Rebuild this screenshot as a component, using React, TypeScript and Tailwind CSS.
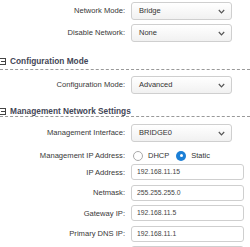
import React from "react";

function Chevron() {
  return (
    <svg width="7" height="5" viewBox="0 0 7 5" className="shrink-0">
      <polyline points="0.8,1 3.5,3.8 6.2,1" fill="none" stroke="#555" strokeWidth="1.2" />
    </svg>
  );
}

function Select({ value }: { value: string }) {
  return (
    <div className="w-[101px] h-[18px] flex items-center justify-between pl-[7px] pr-[6px] rounded-[3px] border border-[#cfcfcf] bg-gradient-to-b from-white to-[#f1f1f1] text-[7.5px] text-[#333]">
      <span>{value}</span>
      <Chevron />
    </div>
  );
}

function TextInput({ value }: { value: string }) {
  return (
    <div className="w-[113px] h-[16px] flex items-center pl-[5px] rounded-[3px] border border-[#cfcfcf] bg-white text-[6.8px] text-[#444]">
      {value}
    </div>
  );
}

function Row({ label, h, children }: { label?: string; h: string; children: React.ReactNode }) {
  return (
    <div className={`flex items-center gap-[6px] ${h}`}>
      <div className="w-[125px] text-right text-[7.6px] text-[#383838] whitespace-nowrap">{label ? `${label}:` : ""}</div>
      {children}
    </div>
  );
}

function Header({ title, h, pb }: { title: string; h: string; pb: string }) {
  return (
    <div className={`flex items-end border-b border-dashed border-[#999] ${h} ${pb}`}>
      <div className="flex items-center gap-[4px] -ml-[1px]">
        <div className="w-[7px] h-[7px] border border-[#444] flex items-center justify-center bg-white">
          <div className="w-[4px] h-[1px] bg-[#444]" />
        </div>
        <span className="text-[8.3px] leading-[10px] font-bold text-[#434656]">{title}</span>
      </div>
    </div>
  );
}

function Radio({ checked, label }: { checked?: boolean; label: string }) {
  return (
    <div className="flex items-center gap-[5px]">
      {checked ? (
        <div className="w-[10px] h-[10px] rounded-full bg-[#1c7fd6] flex items-center justify-center">
          <div className="w-[3.5px] h-[3.5px] rounded-full bg-white" />
        </div>
      ) : (
        <div className="w-[10px] h-[10px] rounded-full border border-[#aaa] bg-white" />
      )}
      <span className="text-[7.5px] text-[#333]">{label}</span>
    </div>
  );
}

export default function App() {
  return (
    <div className="w-[250px] h-[247px] overflow-hidden bg-white font-['Liberation_Sans',Arial,sans-serif]">
      <Row label="Network Mode" h="h-[22px]">
        <Select value="Bridge" />
      </Row>
      <Row label="Disable Network" h="h-[22px]">
        <Select value="None" />
      </Row>
      <Header title="Configuration Mode" h="h-[26px]" pb="pb-[3px]" />
      <Row label="Configuration Mode" h="h-[30px]">
        <Select value="Advanced" />
      </Row>
      <Header title="Management Network Settings" h="h-[17px]" pb="pb-0" />
      <Row label="Management Interface" h="h-[32px]">
        <Select value="BRIDGE0" />
      </Row>
      <Row label="Management IP Address" h="h-[13px]">
        <div className="flex items-center gap-[7px] pl-[2px]">
          <Radio label="DHCP" />
          <Radio checked label="Static" />
        </div>
      </Row>
      <Row label="IP Address" h="h-[20.5px]">
        <TextInput value="192.168.11.15" />
      </Row>
      <Row label="Netmask" h="h-[20.5px]">
        <TextInput value="255.255.255.0" />
      </Row>
      <Row label="Gateway IP" h="h-[20.5px]">
        <TextInput value="192.168.11.5" />
      </Row>
      <Row label="Primary DNS IP" h="h-[20.5px]">
        <TextInput value="192.168.11.1" />
      </Row>
      <Row h="h-[20.5px]">
        <TextInput value="" />
      </Row>
    </div>
  );
}
